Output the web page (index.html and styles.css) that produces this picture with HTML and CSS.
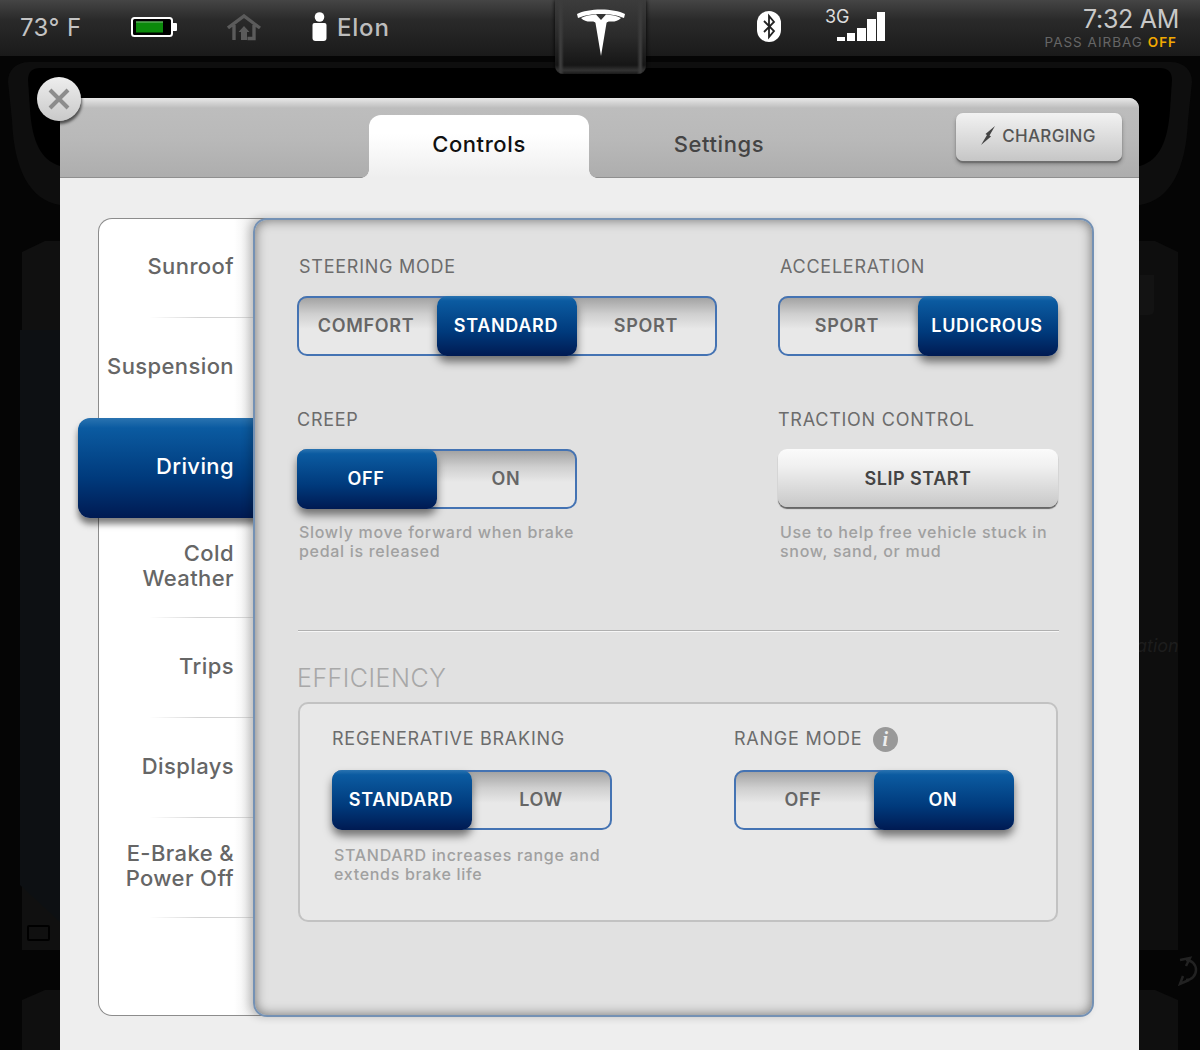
FILE: index.html
```html
<!DOCTYPE html>
<html lang="en">
<head>
    <meta charset="UTF-8">
    <meta name="viewport" content="width=device-width, initial-scale=1.0">
    <title>Controls</title>
    <link rel="stylesheet" href="styles.css">
</head>
<body>
    <!-- dimmed screen behind the dialog -->
    <svg class="backdrop" width="1200" height="1050" viewBox="0 0 1200 1050">
        <path d="M60 205 C30 200 14 170 12 120 L8 82 C8 70 16 62 30 62 L1170 62 C1184 62 1192 70 1192 82 L1188 120 C1186 170 1170 200 1140 205 Z" fill="#0e0e0e"/>
        <path d="M60 166 C40 160 32 140 30 110 L28 80 C28 72 32 68 40 68 L1160 68 C1168 68 1172 72 1172 80 L1170 110 C1168 140 1160 160 1140 166 Z" fill="#000"/>
        <path d="M22 252 L45 241 L60 241 L60 950 L22 950 Z" fill="#101010"/>
        <path d="M20 330 H60 V922 L20 885 Z" fill="#0d1013"/>
        <rect x="28" y="926" width="21" height="14" rx="1" fill="none" stroke="#000" stroke-width="2"/>
        <path d="M22 1000 L45 990 L60 990 L60 1050 L22 1050 Z" fill="#0f0f0f"/>
        <path d="M1139 241 H1155 L1178 252 V950 H1139 Z" fill="#0e0e0e"/>
        <path d="M1140 275 H1154 V310 Q1154 315 1148 315 H1140 Z" fill="#131313"/>
        <path d="M1139 1000 V990 H1155 L1178 1000 V1050 H1139 Z" fill="#0f0f0f"/>
        <text class="backdrop-text" x="1136" y="652">ation</text>
        <path d="M1180 960 L1190 958 L1186 966 M1189 980 L1180 984 L1183 976 M1186 960 A10 10 0 0 1 1186 980" fill="none" stroke="#222" stroke-width="2.5"/>
    </svg>

    <header class="status-bar">
        <div class="temp">73° F</div>
        <svg class="battery" width="46" height="20" viewBox="0 0 46 20">
            <rect x="1" y="1" width="40" height="18" rx="2.5" fill="#000" stroke="#fff" stroke-width="2"/>
            <rect x="5" y="4.5" width="27" height="11" fill="#0b8a0b"/>
            <rect x="5" y="4.5" width="27" height="1" fill="#7db87d"/>
            <rect x="41" y="6" width="5" height="8" rx="1" fill="#fff"/>
        </svg>
        <svg class="house" width="34" height="27" viewBox="0 0 34 27">
            <path d="M1 14 L17 2 L33 14 M7 11 V26 M20.500 24.500 H27 V11" fill="none" stroke="#5b5b5b" stroke-width="3.4"/>
            <path d="M17 12 L22.500 18 H20 V26 H14 V18 H11.500 Z" fill="#5b5b5b"/>
        </svg>
        <svg class="person" width="15" height="30" viewBox="0 0 15 30">
            <circle cx="7.5" cy="5" r="4.8" fill="#fff"/>
            <path d="M0.500 13 Q0.500 11 2.500 11 H12.500 Q14.500 11 14.500 13 V26 Q14.500 29 11.500 29 H3.500 Q0.500 29 0.500 26 Z" fill="#fff"/>
        </svg>
        <div class="driver">Elon</div>
        <div class="logo-tab">
            <svg width="50" height="48" viewBox="0 0 50 48">
                <path d="M1 5 C12 -1 38 -1 49 5 L48 9 C36 3.500 14 3.500 2 9 Z" fill="#fff"/>
                <path d="M5 9 C10 6.500 14 6 20 5.500 L25 11 L30 5.500 C36 6 40 6.500 45 9 C42 12 38 13 34 12.500 C32 12.500 31 13 30.500 14 L25 47 L19.500 14 C19 13 18 12.500 16 12.500 C12 13 8 12 5 9 Z" fill="#fff"/>
            </svg>
        </div>
        <svg class="bluetooth" width="24" height="31" viewBox="0 0 24 31">
            <rect x="0" y="0" width="24" height="31" rx="12" fill="#fff"/>
            <path d="M7 10 L17 20 L12 26 V5 L17 11 L7 21" fill="none" stroke="#222" stroke-width="1.8"/>
        </svg>
        <div class="signal">
            <span class="signal-label">3G</span>
            <svg width="48" height="30" viewBox="0 0 48 30">
                <rect x="0" y="25" width="8" height="4" fill="#fff"/>
                <rect x="10" y="21" width="8" height="8" fill="#fff"/>
                <rect x="20" y="16" width="9" height="13" fill="#fff"/>
                <rect x="30" y="7" width="9" height="22" fill="#fff"/>
                <rect x="40" y="0" width="8" height="29" fill="#fff"/>
            </svg>
        </div>
        <div class="clock">
            <div class="clock-time">7:32 AM</div>
            <div class="airbag">PASS AIRBAG <span class="airbag-off">OFF</span></div>
        </div>
    </header>

    <main class="dialog">
        <button class="close-btn">
            <svg width="22" height="22" viewBox="0 0 22 22">
                <path d="M2 2 L20 20 M20 2 L2 20" stroke="#8c8c8c" stroke-width="4"/>
            </svg>
        </button>

        <div class="tabs">
            <button class="tab tab-active">Controls</button>
            <button class="tab">Settings</button>
            <button class="charging-btn">
                <svg width="16" height="19" viewBox="0 0 16 19">
                    <path d="M15 0 L5.500 8 L7 9 L1 19 L11 10.500 L9.500 9.500 Z" fill="#444"/>
                </svg>
                CHARGING
            </button>
        </div>

        <div class="dialog-body">
            <nav class="side-nav">
                <a class="nav-item">Sunroof</a>
                <a class="nav-item">Suspension</a>
                <a class="nav-item nav-active">Driving</a>
                <a class="nav-item">Cold<br>Weather</a>
                <a class="nav-item">Trips</a>
                <a class="nav-item">Displays</a>
                <a class="nav-item">E-Brake &amp;<br>Power Off</a>
            </nav>

            <section class="content">
                <div class="settings-grid">
                    <div>
                        <div class="label label-indent">STEERING MODE</div>
                        <div class="seg seg-3">
                            <button class="seg-btn">COMFORT</button>
                            <button class="seg-btn seg-on">STANDARD</button>
                            <button class="seg-btn">SPORT</button>
                        </div>
                    </div>
                    <div>
                        <div class="label label-indent">ACCELERATION</div>
                        <div class="seg">
                            <button class="seg-btn">SPORT</button>
                            <button class="seg-btn seg-on">LUDICROUS</button>
                        </div>
                    </div>
                    <div>
                        <div class="label">CREEP</div>
                        <div class="seg">
                            <button class="seg-btn seg-on">OFF</button>
                            <button class="seg-btn">ON</button>
                        </div>
                        <p class="hint">Slowly move forward when brake<br>pedal is released</p>
                    </div>
                    <div>
                        <div class="label">TRACTION CONTROL</div>
                        <button class="slip-btn">SLIP START</button>
                        <p class="hint">Use to help free vehicle stuck in<br>snow, sand, or mud</p>
                    </div>
                </div>

                <hr class="divider">
                <h2 class="section-title">EFFICIENCY</h2>

                <div class="efficiency">
                    <div>
                        <div class="label">REGENERATIVE BRAKING</div>
                        <div class="seg">
                            <button class="seg-btn seg-on">STANDARD</button>
                            <button class="seg-btn">LOW</button>
                        </div>
                        <p class="hint">STANDARD increases range and<br>extends brake life</p>
                    </div>
                    <div>
                        <div class="label label-info">RANGE MODE <span class="info">i</span></div>
                        <div class="seg">
                            <button class="seg-btn">OFF</button>
                            <button class="seg-btn seg-on">ON</button>
                        </div>
                    </div>
                </div>
            </section>
        </div>
    </main>
</body>
</html>
```

FILE: styles.css
```css
* { margin: 0; padding: 0; box-sizing: border-box; }

body {
    position: relative;
    width: 1200px;
    height: 1050px;
    overflow: hidden;
    background: #050505;
    font-family: 'Inter', sans-serif;
    color: #666;
}

button {
    border: none;
    background: none;
    font-family: inherit;
    color: inherit;
}

.backdrop {
    position: absolute;
    top: 0;
    left: 0;
}

.backdrop-text {
    font-family: 'Inter', sans-serif;
    font-style: italic;
    font-size: 18px;
    fill: #1d1d1d;
}

/* status bar */

.status-bar {
    position: relative;
    display: flex;
    align-items: flex-start;
    height: 56px;
    padding-left: 20px;
    background: linear-gradient(#454545, #2a2a2a 35%, #1a1a1a);
}

.temp {
    width: 111px;
    margin-top: 14px;
    font-size: 24px;
    line-height: 28px;
    letter-spacing: 0.4px;
    color: #c4c4c4;
}

.battery { margin-top: 17px; }
.house { margin: 14px 0 0 50px; }
.person { margin: 12px 0 0 51px; }

.driver {
    width: 218px;
    margin: 14px 0 0 10px;
    font-size: 24px;
    line-height: 28px;
    font-weight: 500;
    letter-spacing: 0.8px;
    color: #bdbdbd;
}

.logo-tab {
    display: flex;
    justify-content: center;
    width: 91px;
    height: 74px;
    padding-top: 9px;
    background:
        linear-gradient(90deg, transparent 3px, #3c3c3c 5px, #3c3c3c 6px, transparent 9px, transparent calc(100% - 9px), #3c3c3c calc(100% - 6px), #3c3c3c calc(100% - 5px), transparent calc(100% - 3px)),
        linear-gradient(#3c3c3c, #2a2a2a 50%, #161616 88%, #333 95%, #1a1a1a);
    border-radius: 0 0 8px 8px;
    box-shadow: 0 0 4px #000;
}

.bluetooth { margin: 11px 0 0 111px; }

.signal {
    position: relative;
    margin: 12px 0 0 44px;
    padding-left: 12px;
}

.signal-label {
    position: absolute;
    top: -4px;
    left: 0;
    font-size: 18px;
    line-height: 18px;
    color: #ddd;
}

.clock {
    margin-left: auto;
    padding: 4px 21px 0 0;
    text-align: right;
}

.clock-time {
    font-size: 25px;
    line-height: 30px;
    letter-spacing: -0.3px;
    color: #c8c8c8;
}

.airbag {
    margin-right: 2px;
    font-size: 13.5px;
    line-height: 16px;
    letter-spacing: 1px;
    color: #666;
}

.airbag-off { color: #f2a900; font-weight: 600; }

/* dialog */

.dialog {
    position: relative;
    width: 1079px;
    height: 952px;
    margin: 42px 0 0 60px;
    background: #eee;
    border-radius: 10px 10px 0 0;
}

.close-btn {
    position: absolute;
    top: -21px;
    left: -23px;
    z-index: 3;
    display: flex;
    align-items: center;
    justify-content: center;
    width: 44px;
    height: 44px;
    border-radius: 50%;
    background: linear-gradient(#eee, #c9c9c9);
    box-shadow: 1px 3px 3px rgba(0, 0, 0, 0.6);
}

.tabs {
    display: flex;
    align-items: flex-end;
    height: 80px;
    padding-left: 309px;
    border-radius: 10px 10px 0 0;
    background: linear-gradient(#e8e8e8, #bdbdbd 10px, #b9b9b9 50%, #adadad);
    box-shadow: inset 0 -1px 0 #8f8f8f;
}

.tab {
    position: relative;
    width: 260px;
    height: 63px;
    padding-bottom: 6px;
    font-size: 22px;
    font-weight: 500;
    letter-spacing: 0.6px;
    color: #444;
}

.tab-active {
    width: 220px;
    border-radius: 12px 12px 0 0;
    background: linear-gradient(#fff 30%, #eee);
    color: #111;
}

.tab-active::before,
.tab-active::after {
    content: "";
    position: absolute;
    bottom: 0;
    width: 8px;
    height: 8px;
}

.tab-active::before {
    left: -8px;
    background: radial-gradient(circle at 0 0, transparent 7.5px, #eee 8px);
}

.tab-active::after {
    right: -8px;
    background: radial-gradient(circle at 100% 0, transparent 7.5px, #eee 8px);
}

.charging-btn {
    display: flex;
    align-items: center;
    justify-content: center;
    gap: 6px;
    align-self: flex-start;
    width: 166px;
    height: 48px;
    margin: 15px 17px 0 auto;
    padding: 0 2px 3px 0;
    font-size: 17px;
    font-weight: 500;
    letter-spacing: 0.3px;
    color: #555;
    border-radius: 7px;
    background: linear-gradient(#f2f2f2, #c6c6c6);
    box-shadow: 0 2px 1px #6e6e6e, 0 3px 4px rgba(0, 0, 0, 0.3);
}

.dialog-body {
    display: flex;
    padding: 40px 45px 0 38px;
}

/* side nav */

.side-nav {
    width: 170px;
    height: 798px;
    margin-right: -15px;
    background: linear-gradient(90deg, #fff 80%, #ddd);
    border: 1px solid #8c8c8c;
    border-right: none;
    border-radius: 14px 0 0 14px;
}

.nav-item {
    position: relative;
    display: flex;
    align-items: center;
    justify-content: flex-end;
    height: 100px;
    padding: 0 34px 3px 0;
    text-align: right;
    font-size: 22px;
    line-height: 25px;
    font-weight: 500;
    letter-spacing: 0.4px;
    color: #666;
    border-bottom: 1px solid;
    border-image: linear-gradient(90deg, transparent 30%, #d4d4d4 60%) 1;
}

.nav-item:first-child { margin-top: -1px; }

.nav-item:nth-child(2),
.nav-active { border-bottom: none; }

.nav-active {
    margin-left: -21px;
    color: #fff;
    border-radius: 12px 0 0 12px;
    background: linear-gradient(#2a73b0, #0b5ba1 10%, #003a7c 60%, #001a52);
    box-shadow: 0 6px 6px rgba(0, 0, 0, 0.5);
}

/* main panel */

.content {
    position: relative;
    flex: none;
    width: 841px;
    height: 799px;
    padding: 35px 33px 0 42px;
    background: #e1e1e1;
    border: 2px solid #7491b4;
    border-radius: 14px;
    box-shadow: inset 0 0 12px rgba(0, 0, 0, 0.5), -4px 0 8px rgba(0, 0, 0, 0.2);
}

.settings-grid {
    display: grid;
    grid-template-columns: 481px 280px;
    align-content: start;
    row-gap: 52px;
    height: 340px;
}

.label {
    height: 24px;
    margin-bottom: 17px;
    font-size: 18px;
    line-height: 24px;
    letter-spacing: 0.75px;
    color: #6c6c6c;
}

.label-indent { padding-left: 2px; }

.label-info {
    display: flex;
    align-items: center;
    gap: 11px;
}

.seg {
    display: grid;
    grid-template-columns: repeat(2, 140px);
    width: 280px;
    height: 60px;
    border-radius: 10px;
    background: linear-gradient(#9e9e9e, #cfcfcf 30%, #e8e8e8 55%);
    box-shadow: inset 0 0 0 2px #4473b3;
}

.seg-3 {
    grid-template-columns: repeat(3, 140px);
    width: 420px;
}

.seg-btn {
    padding: 0 2px 1px 0;
    font-size: 18px;
    font-weight: 600;
    letter-spacing: 0.7px;
    color: #666;
}

.seg-on {
    color: #fff;
    border-radius: 10px;
    background: linear-gradient(#2a73b0, #0b5ba1 8%, #003a7c 60%, #001a52);
    box-shadow: 0 6px 8px rgba(0, 0, 0, 0.5);
}

.slip-btn {
    display: block;
    width: 280px;
    height: 58px;
    margin-top: 1px;
    font-size: 18px;
    font-weight: 600;
    letter-spacing: 0.5px;
    color: #444;
    border-radius: 9px;
    background: linear-gradient(#fbfbfb, #f0f0f0 30%, #c8c8c8);
    box-shadow: 0 2px 1px #666;
}

.hint {
    margin: 14px 0 0 2px;
    font-size: 16px;
    line-height: 19px;
    font-weight: 500;
    letter-spacing: 0.7px;
    color: #a0a0a0;
}

.slip-btn + .hint { margin-top: 16px; }

.divider {
    width: 761px;
    margin: 35px 0 0 1px;
    border: none;
    border-top: 1px solid #b0b0b0;
    border-bottom: 1px solid #f6f6f6;
}

.section-title {
    height: 30px;
    margin-top: 31px;
    font-size: 25px;
    line-height: 30px;
    font-weight: 300;
    letter-spacing: 0.5px;
    color: #a8a8a8;
}

.efficiency {
    display: grid;
    grid-template-columns: 402px 280px;
    width: 760px;
    height: 220px;
    margin: 9px 0 0 1px;
    padding: 23px 0 0 32px;
    background: #e8e8e8;
    border: 2px solid #c2c2c2;
    border-radius: 10px;
}

.efficiency .label { margin-bottom: 19px; }
.efficiency .hint { margin-top: 16px; }

.info {
    display: flex;
    align-items: center;
    justify-content: center;
    width: 25px;
    height: 25px;
    border-radius: 50%;
    background: #999;
    font-family: 'Liberation Serif', serif;
    font-style: italic;
    font-weight: 700;
    font-size: 20px;
    color: #eee;
}
```
